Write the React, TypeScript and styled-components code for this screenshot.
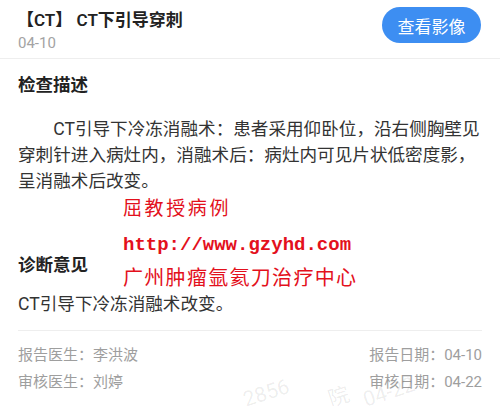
import * as React from "react";
import styled, { createGlobalStyle } from "styled-components";

const GlobalStyle = createGlobalStyle`
  html, body {
    margin: 0;
    padding: 0;
    background: #ffffff;
  }
  body {
    font-family: Roboto, "Noto Sans CJK SC", sans-serif;
    color: #333333;
  }
`;

const stamp = ["屈教授病例", "http://www.gzyhd.com", "广州肿瘤氩氦刀治疗中心"];

const App = () => {
  return (
    <Page>
      <GlobalStyle />
      <Header>
        <HeaderText>
          <Title>【CT】 CT下引导穿刺</Title>
          <DateText>04-10</DateText>
        </HeaderText>
        <ViewButton type="button">查看影像</ViewButton>
      </Header>

      <Body>
        <Section>
          <SectionTitle>检查描述</SectionTitle>
          <Paragraph $indent>
            CT引导下冷冻消融术：患者采用仰卧位，沿右侧胸壁见
            <br />
            穿刺针进入病灶内，消融术后：病灶内可见片状低密度影，
            <br />
            呈消融术后改变。
          </Paragraph>
        </Section>

        <Section $gap={59}>
          <SectionTitle>诊断意见</SectionTitle>
          <Paragraph $top={14}>CT引导下冷冻消融术改变。</Paragraph>
        </Section>

        <Footer>
          <FooterRow>
            <Meta>报告医生：李洪波</Meta>
            <Meta>报告日期：04-10</Meta>
          </FooterRow>
          <FooterRow>
            <Meta>审核医生：刘婷</Meta>
            <Meta>审核日期：04-22</Meta>
          </FooterRow>
        </Footer>
      </Body>

      <Stamp>
        <StampLine>{stamp[0]}</StampLine>
        <StampUrl>{stamp[1]}</StampUrl>
        <StampLine $wide>{stamp[2]}</StampLine>
      </Stamp>

      <Watermark>
        <Mark $w={85}>2856</Mark>
        <Mark $w={35}>院</Mark>
        <Mark>04-22</Mark>
      </Watermark>
    </Page>
  );
};

const Page = styled.div`
  position: relative;
  width: 500px;
  height: 406px;
  overflow: hidden;
  background: #ffffff;
`;

const Header = styled.header`
  display: flex;
  justify-content: space-between;
  align-items: flex-start;
  height: 58px;
  padding: 0 19px 0 18px;
  border-bottom: 1px solid #eeeeee;
`;

const HeaderText = styled.div`
  display: flex;
  flex-direction: column;
  padding-top: 8px;
`;

const Title = styled.h1`
  margin: 0 0 0 -1px;
  font-size: 17px;
  line-height: 24px;
  font-weight: 600;
  color: #222222;
`;

const DateText = styled.div`
  margin-top: 1px;
  font-size: 15px;
  line-height: 20px;
  color: #a3a3a3;
`;

const ViewButton = styled.button`
  margin-top: 7px;
  width: 99px;
  height: 36px;
  border: none;
  border-radius: 18px;
  background: #3d8ef2;
  color: #ffffff;
  font-family: "Noto Sans CJK SC", sans-serif;
  font-size: 17px;
  padding: 0;
`;

const Body = styled.main`
  padding: 14px 18px 0;
`;

const Section = styled.section<{ $gap?: number }>`
  margin-top: ${(p) => p.$gap ?? 0}px;
`;

const SectionTitle = styled.h2`
  margin: 0;
  font-size: 17.5px;
  line-height: 24px;
  font-weight: 700;
  color: #222222;
`;

const Paragraph = styled.p<{ $indent?: boolean; $top?: number }>`
  margin: ${(p) => p.$top ?? 18.5}px -6px 0 0;
  font-size: 17.6px;
  line-height: 26px;
  color: #333333;
  white-space: nowrap;
  text-indent: ${(p) => (p.$indent ? "2em" : "0")};
`;

const Footer = styled.footer`
  margin-top: 13px;
  padding-top: 11px;
  border-top: 1px solid #eeeeee;
`;

const FooterRow = styled.div`
  display: flex;
  justify-content: space-between;
  font-size: 15px;
  line-height: 27px;
`;

const Meta = styled.span`
  color: #9e9e9e;
`;

const Stamp = styled.div`
  position: absolute;
  left: 123px;
  top: 195px;
  display: flex;
  flex-direction: column;
  color: #e3101c;
`;

const StampLine = styled.div<{ $wide?: boolean }>`
  font-family: "Noto Sans CJK SC", sans-serif;
  font-size: ${(p) => (p.$wide ? 20 : 19)}px;
  letter-spacing: ${(p) => (p.$wide ? 1.3 : 2.6)}px;
  line-height: 24px;
  white-space: nowrap;
`;

const StampUrl = styled.div`
  margin: 14px 0 8px;
  font-family: "Liberation Mono", monospace;
  font-weight: 700;
  font-size: 19px;
  line-height: 24px;
  white-space: nowrap;
`;

const Watermark = styled.div`
  position: absolute;
  left: 245px;
  top: 380px;
  display: flex;
  align-items: flex-start;
  font-family: Roboto, "Noto Sans CJK SC", sans-serif;
  font-size: 21px;
  line-height: 24px;
  color: rgba(0, 0, 0, 0.08);
  white-space: nowrap;
  pointer-events: none;
`;

const Mark = styled.span<{ $w?: number }>`
  display: inline-block;
  width: ${(p) => (p.$w ? `${p.$w}px` : "auto")};
  transform: rotate(-18deg) translateY(8px);
  transform-origin: left bottom;
`;

export default App;
